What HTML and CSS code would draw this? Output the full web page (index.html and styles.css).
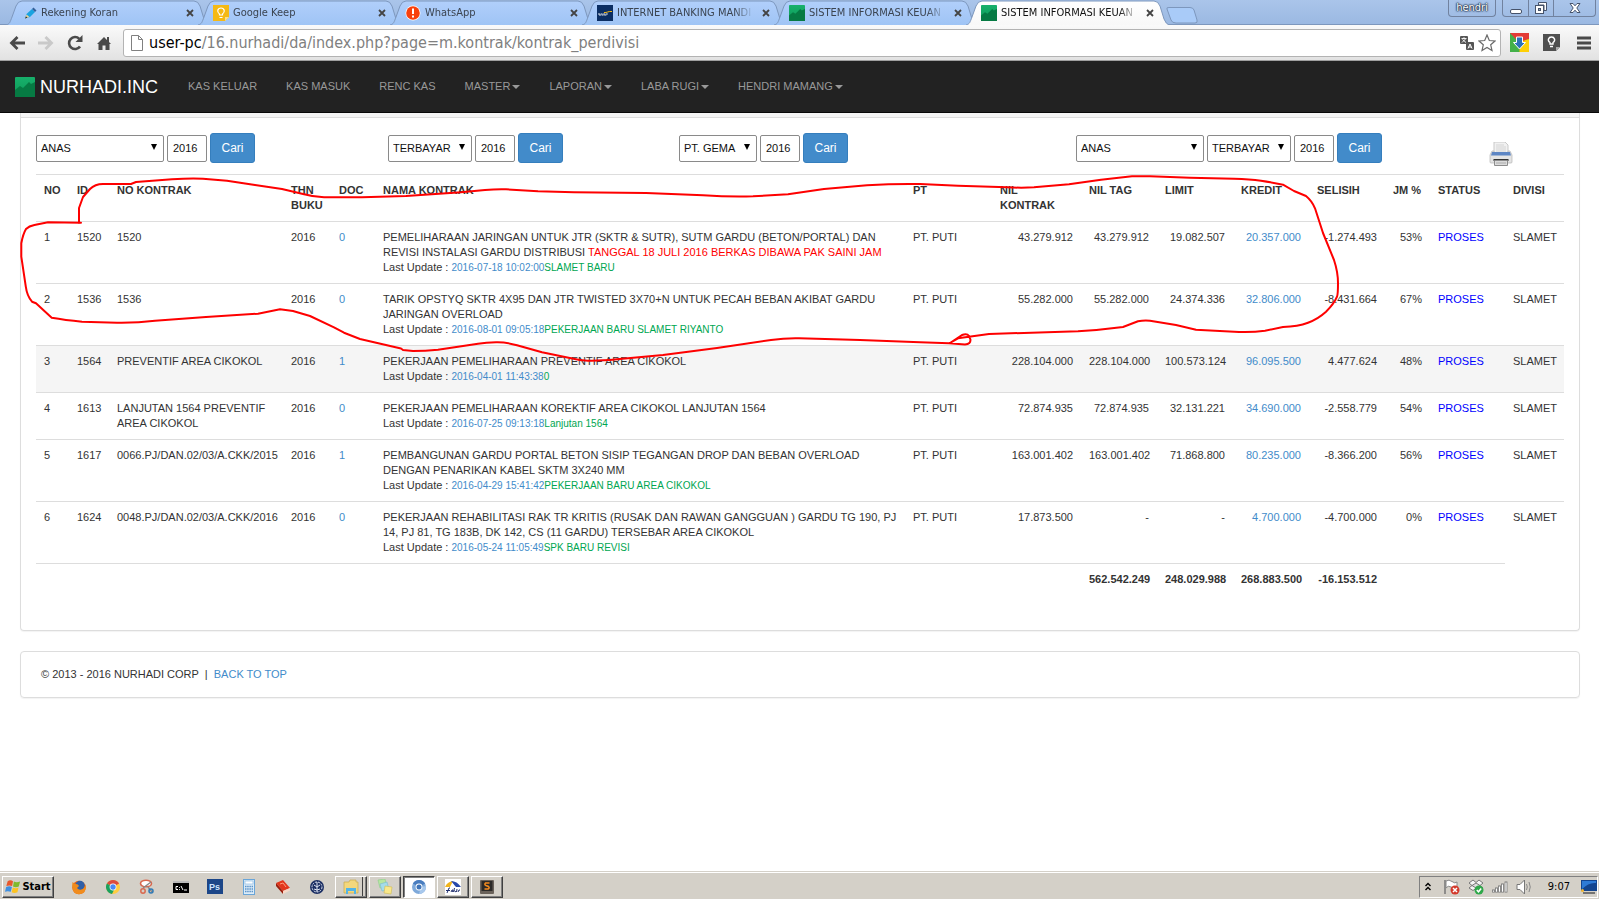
FILE: index.html
```html
<!DOCTYPE html>
<html lang="id">
<head>
<meta charset="utf-8">
<title>SISTEM INFORMASI KEUANGAN</title>
<link rel="stylesheet" href="styles.css">
</head>
<body>
<svg class="defs" aria-hidden="true">
  <defs>
    <linearGradient id="gTab" x1="0" y1="0" x2="0" y2="1"><stop offset="0" stop-color="#b1cffb"/><stop offset="1" stop-color="#9fc4f5"/></linearGradient>
    <linearGradient id="gActive" x1="0" y1="0" x2="0" y2="1"><stop offset="0" stop-color="#ffffff"/><stop offset="1" stop-color="#f8f8f8"/></linearGradient>
    <linearGradient id="gGreen" x1="0" y1="0" x2="0" y2="1"><stop offset="0" stop-color="#17b06b"/><stop offset="1" stop-color="#0d9a58"/></linearGradient>
    <symbol id="tabshape" viewBox="0 0 203 25"><path d="M0 25C4 24 4 22 6 17L10 6Q12 1 16 1H188Q192 1 194 6L198 19Q200 24 203 25" stroke="#7d97bd"/></symbol>
    <symbol id="chart" viewBox="0 0 20 20"><rect width="20" height="20" rx="1" fill="url(#gGreen)"/><path d="M0 13L5 9L8 11L14 5L16 7L20 5V20H0Z" fill="#067a43"/></symbol>
    <symbol id="x" viewBox="0 0 8 8"><path d="M1 1L7 7M7 1L1 7" stroke="#444" stroke-width="1.8"/></symbol>
    <symbol id="chrome" viewBox="0 0 16 16"><circle cx="8" cy="8" r="7" fill="#ffcd40"/><path d="M8 8L1.9 4.5A7 7 0 0 1 14.1 4.5Z" fill="#dd4b3e"/><path d="M8 8L1.9 4.5A7 7 0 0 0 7 14.9L10 9Z" fill="#1aa15f"/><circle cx="8" cy="8" r="3.4" fill="#fff"/><circle cx="8" cy="8" r="2.7" fill="#4a8af4"/></symbol>
  </defs>
</svg>

<div class="browser">
  <header class="tabstrip">
    <div class="tabs">
      <div class="tab"><svg class="tab-bg" preserveAspectRatio="none" fill="url(#gTab)"><use href="#tabshape"/></svg>
        <svg class="fav" viewBox="0 0 16 16"><path d="M4 13.500L5.500 9L11 4L14 7L9 12Z" fill="#1aa3e0"/><path d="M11 4L12.500 2.500L15.500 5.500L14 7Z" fill="#33619a"/><path d="M4 13.500L5.500 9.500L8.500 12Z" fill="#e8d29a"/><path d="M4 13.500L5 11.500L6.500 12.500Z" fill="#222"/></svg>
        <span class="tab-title">Rekening Koran</span><button class="tab-x" aria-label="Close"><svg><use href="#x"/></svg></button></div>
      <div class="tab"><svg class="tab-bg" preserveAspectRatio="none" fill="url(#gTab)"><use href="#tabshape"/></svg>
        <svg class="fav" viewBox="0 0 16 16"><path d="M0 0H16V12L12 16H0Z" fill="#f5b914"/><path d="M12 16V12H16Z" fill="#fbe08a"/><path d="M6.500 10V9C3.500 7 4.500 3 8 3S12.500 7 9.500 9V10ZM6.500 12.500H9.500" fill="none" stroke="#fff" stroke-width="1.200"/></svg>
        <span class="tab-title">Google Keep</span><button class="tab-x" aria-label="Close"><svg><use href="#x"/></svg></button></div>
      <div class="tab"><svg class="tab-bg" preserveAspectRatio="none" fill="url(#gTab)"><use href="#tabshape"/></svg>
        <svg class="fav" viewBox="0 0 16 16"><circle cx="8" cy="8" r="7.500" fill="#fff"/><circle cx="8" cy="8" r="6.800" fill="#f8400d"/><path d="M8 3.500V9M8 10.500V12.500" stroke="#fff" stroke-width="2"/></svg>
        <span class="tab-title">WhatsApp</span><button class="tab-x" aria-label="Close"><svg><use href="#x"/></svg></button></div>
      <div class="tab"><svg class="tab-bg" preserveAspectRatio="none" fill="url(#gTab)"><use href="#tabshape"/></svg>
        <svg class="fav" viewBox="0 0 16 16"><rect width="16" height="16" fill="#0b2e63"/><path d="M1 9H11M2 10H10" stroke="#dfe6ef" stroke-dasharray="2 .6"/><path d="M7 7.500C10 8 11 6 15 6.500" stroke="#f5b914" fill="none"/></svg>
        <span class="tab-title">INTERNET BANKING MANDI</span><button class="tab-x" aria-label="Close"><svg><use href="#x"/></svg></button></div>
      <div class="tab"><svg class="tab-bg" preserveAspectRatio="none" fill="url(#gTab)"><use href="#tabshape"/></svg>
        <svg class="fav"><use href="#chart"/></svg>
        <span class="tab-title">SISTEM INFORMASI KEUAN</span><button class="tab-x" aria-label="Close"><svg><use href="#x"/></svg></button></div>
      <div class="tab active"><svg class="tab-bg" preserveAspectRatio="none" fill="url(#gActive)"><use href="#tabshape"/></svg>
        <svg class="fav"><use href="#chart"/></svg>
        <span class="tab-title">SISTEM INFORMASI KEUAN</span><button class="tab-x" aria-label="Close"><svg><use href="#x"/></svg></button></div>
      <button class="newtab" aria-label="New tab"><svg viewBox="0 0 32 17"><path d="M1 2Q0 .500 3 .500H24Q27 .500 28 3L31 13Q32 16 29 16H10Q6 16 5 13Z" fill="#a9cbf8" stroke="#7d97bd"/></svg></button>
    </div>
    <button class="user">hendri</button>
    <div class="winctl">
      <button aria-label="Minimize"><svg viewBox="0 0 14 14"><rect x="1.500" y="8.500" width="11" height="4" rx="1.500" fill="#fff" stroke="#46536b"/></svg></button>
      <button aria-label="Restore"><svg viewBox="0 0 14 14"><path d="M4.500 1.500H12.500V9.500H10V4H4.500Z" fill="#fff" stroke="#46536b"/><rect x="1.500" y="4.500" width="8" height="8" fill="#fff" stroke="#46536b"/><rect x="4.500" y="7.500" width="2" height="2" fill="#9ab" stroke="#46536b"/></svg></button>
      <button class="wide" aria-label="Close window"><svg viewBox="0 0 14 14"><path d="M2 2.500H5L7 4.800L9 2.500H12L8.800 7L12 11.500H9L7 9.200L5 11.500H2L5.200 7Z" fill="#fff" stroke="#46536b"/></svg></button>
    </div>
  </header>

  <div class="toolbar">
    <button aria-label="Back"><svg viewBox="0 0 16 16"><path d="M8.500 2L2.500 8L8.500 14M2.500 8H16" fill="none" stroke="#4a4a4a" stroke-width="2.800"/></svg></button>
    <button aria-label="Forward"><svg viewBox="0 0 16 16"><path d="M7.500 2L13.500 8L7.500 14M13.500 8H0" fill="none" stroke="#c9c9c9" stroke-width="2.800"/></svg></button>
    <button aria-label="Reload"><svg viewBox="0 0 16 16"><path d="M13 11.500A6 6 0 1 1 12.300 3.800" fill="none" stroke="#4a4a4a" stroke-width="2.600"/><path d="M15.500 0V7H8.500Z" fill="#4a4a4a"/></svg></button>
    <button aria-label="Home"><svg viewBox="0 0 16 16"><path d="M1 9L8 2L11 5V2H13V7L15 9H13.500V15H9.500V10.500H6.500V15H2.500V9Z" fill="#4a4a4a"/></svg></button>
    <div class="omnibox">
      <svg class="page-ico" viewBox="0 0 12 16"><path d="M.500 .500H7.500L11.500 4.500V15.500H.500ZM7.500 .500V4.500H11.500" fill="#fff" stroke="#808080"/></svg>
      <span class="url"><b>user-pc</b>/16.nurhadi/da/index.php?page=m.kontrak/kontrak_perdivisi</span>
      <svg class="tr-ico" viewBox="0 0 14 14"><rect width="8" height="8" rx="1" fill="#555"/><path d="M1.500 2.500H6.500M4 1.200V2.500M2 6.500L5.500 3M2.500 3.500L6 6.500" stroke="#fff" stroke-width=".9"/><rect x="6" y="6" width="8" height="8" rx="1" fill="#555"/><path d="M8 12.500L10 8L12 12.500M8.700 11H11.300" stroke="#fff" fill="none"/></svg>
      <svg class="star" viewBox="0 0 18 18"><path d="M9 1L11.300 6.500L17 7L12.700 10.800L14 16.600L9 13.500L4 16.600L5.300 10.800L1 7L6.700 6.500Z" fill="#fff" stroke="#6a6a6a" stroke-width="1.200"/></svg>
    </div>
    <button class="ext" aria-label="Downloader"><svg viewBox="0 0 19 19"><path d="M0 0H19V19H0Z" fill="#43b049"/><path d="M0 0H19V6L9.500 10Z" fill="#e33b36"/><path d="M19 6V19H9.500V9Z" fill="#fed006"/><path d="M6.500 4H12.500V9.500H15.500L9.500 16L3.500 9.500H6.500Z" fill="#2c72b8" stroke="#fff"/></svg></button>
    <button class="ext" aria-label="Keep"><svg viewBox="0 0 19 19"><path d="M1 1H18V14L14 18H1Z" fill="#4f4f4f"/><path d="M14 18V14H18Z" fill="#aaa"/><path d="M8 11V9.500C5 7.500 6.500 4 9.500 4S14 7.500 11 9.500V11ZM8 13.500H11" fill="none" stroke="#fff" stroke-width="1.400"/></svg></button>
    <button class="menu" aria-label="Menu"><svg viewBox="0 0 14 14"><path d="M0 2H14M0 7H14M0 12H14" stroke="#4a4a4a" stroke-width="3"/></svg></button>
  </div>
</div>

<nav class="navbar">
  <a class="brand" href="#"><svg><use href="#chart"/></svg>NURHADI.INC</a>
  <a href="#">KAS KELUAR</a>
  <a href="#">KAS MASUK</a>
  <a href="#">RENC KAS</a>
  <a href="#">MASTER<i class="caret"></i></a>
  <a href="#">LAPORAN<i class="caret"></i></a>
  <a href="#">LABA RUGI<i class="caret"></i></a>
  <a href="#">HENDRI MAMANG<i class="caret"></i></a>
</nav>

<main class="content">
  <section class="panel main-panel">
    <div class="panel-head"></div>
    <div class="panel-body">
      <div class="filters">
        <form class="filter">
          <span class="pick"><select class="w-l" aria-label="Divisi"><option>ANAS</option></select></span>
          <input type="text" value="2016" aria-label="Tahun"><button type="button" class="btn">Cari</button>
        </form>
        <form class="filter">
          <span class="pick"><select class="w-m" aria-label="Status"><option>TERBAYAR</option></select></span>
          <input type="text" value="2016" aria-label="Tahun"><button type="button" class="btn">Cari</button>
        </form>
        <form class="filter">
          <span class="pick"><select class="w-s" aria-label="PT"><option>PT. GEMA</option></select></span>
          <input type="text" value="2016" aria-label="Tahun"><button type="button" class="btn">Cari</button>
        </form>
        <form class="filter">
          <span class="pick"><select class="w-l" aria-label="Divisi"><option>ANAS</option></select></span>
          <span class="pick"><select class="w-m" aria-label="Status"><option>TERBAYAR</option></select></span>
          <input type="text" value="2016" aria-label="Tahun"><button type="button" class="btn">Cari</button>
        </form>
        <a class="print" href="#" aria-label="Print"><svg viewBox="0 0 24 24"><path d="M5 0H16L19 3V12H5Z" fill="#f1f1f1" stroke="#c9c9c9"/><path d="M7 3H15M7 5H17M7 7H17M7 9H17" stroke="#d5d5d5"/><path d="M3 9H5V11H19V9H21L23 13V20Q23 21 22 21H2Q1 21 1 20V13Z" fill="#e4e4e4" stroke="#b4b4b4" stroke-width=".7"/><path d="M3 10H21L22 13.500H2Z" fill="#5d86c4"/><path d="M4.500 17H19.500V19H4.500Z" fill="#333"/><path d="M5.500 18.500H18.500V23.500H5.500Z" fill="#dcdcdc" stroke="#8c8c8c"/><path d="M7 21H17" stroke="#aaa"/></svg></a>
      </div>

      <table class="grid">
        <colgroup><col class="c33"><col class="c40"><col class="c174"><col class="c48"><col class="c44"><col class="c530"><col class="c87"><col class="c89"><col class="c76"><col class="c76"><col class="c76"><col class="c76"><col class="c45"><col class="c75"><col class="c59"></colgroup>
        <thead>
          <tr><th>NO</th><th>ID</th><th>NO KONTRAK</th><th>THN<br>BUKU</th><th>DOC</th><th>NAMA KONTRAK</th><th>PT</th><th>NIL<br>KONTRAK</th><th>NIL TAG</th><th>LIMIT</th><th>KREDIT</th><th>SELISIH</th><th>JM %</th><th>STATUS</th><th>DIVISI</th></tr>
        </thead>
        <tbody>
          <tr><td>1</td><td>1520</td><td>1520</td><td>2016</td><td><a href="#">0</a></td>
            <td>PEMELIHARAAN JARINGAN UNTUK JTR (SKTR &amp; SUTR), SUTM GARDU (BETON/PORTAL) DAN<br>REVISI INSTALASI GARDU DISTRIBUSI <span class="alert">TANGGAL 18 JULI 2016 BERKAS DIBAWA PAK SAINI JAM</span><br>Last Update : <small><span class="date">2016-07-18 10:02:00</span><span class="note">SLAMET BARU</span></small></td>
            <td>PT. PUTI</td><td class="n">43.279.912</td><td class="n">43.279.912</td><td class="n">19.082.507</td><td class="n"><a href="#">20.357.000</a></td><td class="n">-1.274.493</td><td class="n">53%</td><td class="st">PROSES</td><td>SLAMET</td></tr>
          <tr><td>2</td><td>1536</td><td>1536</td><td>2016</td><td><a href="#">0</a></td>
            <td>TARIK OPSTYQ SKTR 4X95 DAN JTR TWISTED 3X70+N UNTUK PECAH BEBAN AKIBAT GARDU<br>JARINGAN OVERLOAD<br>Last Update : <small><span class="date">2016-08-01 09:05:18</span><span class="note">PEKERJAAN BARU SLAMET RIYANTO</span></small></td>
            <td>PT. PUTI</td><td class="n">55.282.000</td><td class="n">55.282.000</td><td class="n">24.374.336</td><td class="n"><a href="#">32.806.000</a></td><td class="n">-8.431.664</td><td class="n">67%</td><td class="st">PROSES</td><td>SLAMET</td></tr>
          <tr class="hover"><td>3</td><td>1564</td><td>PREVENTIF AREA CIKOKOL</td><td>2016</td><td><a href="#">1</a></td>
            <td>PEKERJAAN PEMELIHARAAN PREVENTIF AREA CIKOKOL<br>Last Update : <small><span class="date">2016-04-01 11:43:38</span><span class="note">0</span></small></td>
            <td>PT. PUTI</td><td class="n">228.104.000</td><td class="n">228.104.000</td><td class="n">100.573.124</td><td class="n"><a href="#">96.095.500</a></td><td class="n">4.477.624</td><td class="n">48%</td><td class="st">PROSES</td><td>SLAMET</td></tr>
          <tr><td>4</td><td>1613</td><td>LANJUTAN 1564 PREVENTIF<br>AREA CIKOKOL</td><td>2016</td><td><a href="#">0</a></td>
            <td>PEKERJAAN PEMELIHARAAN KOREKTIF AREA CIKOKOL LANJUTAN 1564<br>Last Update : <small><span class="date">2016-07-25 09:13:18</span><span class="note">Lanjutan 1564</span></small></td>
            <td>PT. PUTI</td><td class="n">72.874.935</td><td class="n">72.874.935</td><td class="n">32.131.221</td><td class="n"><a href="#">34.690.000</a></td><td class="n">-2.558.779</td><td class="n">54%</td><td class="st">PROSES</td><td>SLAMET</td></tr>
          <tr><td>5</td><td>1617</td><td>0066.PJ/DAN.02/03/A.CKK/2015</td><td>2016</td><td><a href="#">1</a></td>
            <td>PEMBANGUNAN GARDU PORTAL BETON SISIP TEGANGAN DROP DAN BEBAN OVERLOAD<br>DENGAN PENARIKAN KABEL SKTM 3X240 MM<br>Last Update : <small><span class="date">2016-04-29 15:41:42</span><span class="note">PEKERJAAN BARU AREA CIKOKOL</span></small></td>
            <td>PT. PUTI</td><td class="n">163.001.402</td><td class="n">163.001.402</td><td class="n">71.868.800</td><td class="n"><a href="#">80.235.000</a></td><td class="n">-8.366.200</td><td class="n">56%</td><td class="st">PROSES</td><td>SLAMET</td></tr>
          <tr><td>6</td><td>1624</td><td>0048.PJ/DAN.02/03/A.CKK/2016</td><td>2016</td><td><a href="#">0</a></td>
            <td>PEKERJAAN REHABILITASI RAK TR KRITIS (RUSAK DAN RAWAN GANGGUAN ) GARDU TG 190, PJ<br>14, PJ 81, TG 183B, DK 142, CS (11 GARDU) TERSEBAR AREA CIKOKOL<br>Last Update : <small><span class="date">2016-05-24 11:05:49</span><span class="note">SPK BARU REVISI</span></small></td>
            <td>PT. PUTI</td><td class="n">17.873.500</td><td class="n">-</td><td class="n">-</td><td class="n"><a href="#">4.700.000</a></td><td class="n">-4.700.000</td><td class="n">0%</td><td class="st">PROSES</td><td>SLAMET</td></tr>
        </tbody>
        <tfoot>
          <tr><td colspan="8"></td><td class="n">562.542.249</td><td class="n">248.029.988</td><td class="n">268.883.500</td><td class="n">-16.153.512</td><td></td><td></td></tr>
        </tfoot>
      </table>
    </div>
  </section>

  <footer class="panel foot">© 2013 - 2016 NURHADI CORP &nbsp;|&nbsp; <a href="#">BACK TO TOP</a></footer>
</main>

<svg class="scribble" viewBox="0 0 1599 400" preserveAspectRatio="none" aria-hidden="true"><path d="M79 223L79 208L83 197L90 189Q95 184 103 184L131 184L136 182L172 179.300Q190 178 203 178.700L227 180.700L255 185L282 189L303 194Q314 197 324 197.300H362L406 196L461 192.300L485 190Q496 189 506 189.300L538 191.300L574 192.300L646 193L703 195.300Q730 197 753 196.300L788 194.300L824 189L867 185.300Q895 183.500 920 184L958 185.700L1007 187.300Q1022 188 1034 187.300L1069 184.300L1101 179.700L1132 176.300H1150L1190 177.700L1234 178.700Q1250 179 1261 180.700T1283 184.700L1294 191L1306 196Q1312 201 1315 208.300L1323 233L1334 260Q1338 272 1338 283.300T1337 296.700Q1334 304 1326 311.700Q1318 319 1308 322.700T1283 327L1265 330.700Q1253 332.500 1239 332L1196 329.700L1176 325L1150 320.700Q1144 320 1138 321.300L1123 327Q1100 330 1078 331.300L989 334L958 338.300L950 343L962 335Q967 333 969 336L970.400 339.300Q971 344 965 344.500L949 343.300L920 342.300L860 340L799 338.300Q785 338 771 340L717 348L663 355L617 359.300Q600 361 588 360.700Q580 360.500 571 358.300L542 352.300L517 345.300Q506 342 496 342.300T478 343.700L438 349.700Q425 351 413 351L403 350L401 348.500L360 339L344 332.700L334 327.300L310 316L293 311L280 309.300L258 313.700L206 317L155 320.700Q137 323 117 322.700L82 321.700Q65 320 51.700 317.700L36 303.300L32 301.700Q27 296 25.800 286.700L21.300 256.700V243.300Q23 234 26 229Q29 226 34.400 225L48 222.300L81 222.700" fill="none" stroke="#fe0000" stroke-width="2" stroke-linejoin="round" stroke-linecap="round"/></svg>

<footer class="taskbar">
  <button class="start"><svg viewBox="0 0 18 16"><path d="M3 2Q6 0 9 2L8 7.500Q5 6 1.500 7.500Z" fill="#e8582c"/><path d="M10 2.500Q13 4 17 2.500L15.500 8Q12 9.500 9 8Z" fill="#7fba2c"/><path d="M1.300 8.700Q5 7 7.800 8.700L6.500 14Q3 12.500 0 14Z" fill="#3f8fe0"/><path d="M8.800 9.200Q12 11 15.200 9.200L14 14.500Q10.500 16 7.500 14.500Z" fill="#fcc321"/></svg>Start</button>
  <div class="quick">
    <svg viewBox="0 0 16 16"><circle cx="8" cy="8.500" r="6.800" fill="#e8661b"/><circle cx="9" cy="6.500" r="4.700" fill="#2f5fa8"/><path d="M1.500 3L4 5Q7 4.500 8 7L6 9Q8 12 12 10Q14 8 14.800 5Q16 15 8 15.300Q0 15 1.500 3Z" fill="#f08c1d"/></svg>
    <svg><use href="#chrome"/></svg>
    <svg viewBox="0 0 16 16"><ellipse cx="7" cy="4.500" rx="5.500" ry="3.300" fill="#fff" stroke="#d9694f" stroke-width="1.600"/><path d="M4 9L12 3M9 8L13 13" stroke="#888" stroke-width="1.400"/><circle cx="12" cy="12" r="2" fill="none" stroke="#2f79b5" stroke-width="1.500"/><circle cx="4" cy="12" r="2.200" fill="none" stroke="#d9694f" stroke-width="1.500"/></svg>
    <svg viewBox="0 0 16 16"><rect x="0" y="2" width="16" height="12" fill="#000"/><rect y="2" width="16" height="2" fill="#bbb"/><path d="M5 7.500H3V10.500H5M6.500 8V8.800M6.500 10V10.800M8 7L10 11M11 11H14" stroke="#fff" fill="none"/></svg>
    <svg viewBox="0 0 16 16"><rect x="0" y="0" width="16" height="15" fill="#1c4688"/><text x="2" y="11" class="ps">Ps</text></svg>
    <svg viewBox="0 0 16 16"><rect x="2.500" y=".5" width="11" height="15" fill="#dcecf8" stroke="#6aa5d8"/><rect x="4" y="2" width="8" height="3" fill="#fff" stroke="#7fb2df" stroke-width=".6"/><path d="M4 7.500H12M4 10H12M4 12.500H12" stroke="#5c93c8" stroke-width="1.500" stroke-dasharray="1.500 .7"/></svg>
    <svg viewBox="0 0 16 16"><path d="M1 4L8 1L15 9L8 12Z" fill="#e2371c"/><path d="M1 4L8 12V15L1 7Z" fill="#9c1d0c"/><path d="M8 12L15 9V11.500L8 15Z" fill="#f5d9c8"/><path d="M5 5L8 4L11 8" stroke="#ff9a7a" fill="none"/></svg>
    <svg viewBox="0 0 16 16"><circle cx="8" cy="8" r="7" fill="#1c2f63"/><circle cx="8" cy="8" r="5" fill="none" stroke="#dfe6f3" stroke-dasharray="2 1"/><path d="M8 3V13M5 6L8 8L11 6M5 10L8 11L11 10" stroke="#dfe6f3" fill="none"/></svg>
  </div>
  <div class="apps">
    <button class="stack" aria-label="Explorer"><svg viewBox="0 0 16 16"><path d="M1 3H6L7 1H13V3H15V14H1Z" fill="#f3d77c" stroke="#c9a94c" stroke-width=".7"/><path d="M3 9H13V15H11V12H5V15H3Z" fill="#53b4e6"/></svg></button>
    <button aria-label="Notes"><svg viewBox="0 0 16 16"><path d="M1 1L8 0L10 8L3 9Z" fill="#b9e6a0" stroke="#8c8" stroke-width=".6"/><path d="M3 5L10 3L12 11L5 12Z" fill="#a5dcea" stroke="#7bc" stroke-width=".6"/><path d="M8 7L15 8L14 15L7 14Z" fill="#fae88a" stroke="#cb5" stroke-width=".6"/></svg></button>
    <button class="pressed" aria-label="Chromium"><svg viewBox="0 0 16 16"><circle cx="8" cy="8" r="7" fill="#7ea9da"/><path d="M8 8L1.900 4.500A7 7 0 0 1 14.100 4.500Z" fill="#4a7dbf"/><path d="M8 15A7 7 0 0 0 15 7L10 8Z" fill="#a8c8ec"/><circle cx="8" cy="8" r="3.400" fill="#fff"/><circle cx="8" cy="8" r="2.500" fill="#3f74b8"/></svg></button>
    <button aria-label="Faktur"><svg viewBox="0 0 16 16"><rect width="16" height="16" fill="#fff"/><path d="M0 8Q2 3 8 2L5 8Z" fill="#f1b51c"/><path d="M6 2Q12 2 16 8H11Z" fill="#2848a8"/><path d="M2 14L4 9H5M1 11.500H5M6 13L7 11H8L7.500 13M9.500 9L8.500 13M9 11.500L11 13M12 10L11.500 13M13 13L14 11H15" stroke="#22306e" fill="none"/></svg></button>
    <button aria-label="Editor"><svg viewBox="0 0 16 16"><rect x="1" y="1" width="14" height="14" rx="1" fill="#6a625a"/><rect x="2.500" y="2" width="11" height="10" fill="#2c2a28"/><path d="M10.500 4H6.500Q5 5.500 7 6.500L9.500 7.500Q11 9 9 10H5.500" fill="none" stroke="#f58b1e" stroke-width="1.500"/></svg></button>
  </div>
  <div class="tray">
    <svg viewBox="0 0 16 16"><path d="M5.500 7L8 4.500L10.500 7M5.500 11L8 8.500L10.500 11" fill="none" stroke="#000" stroke-width="1.400"/></svg>
    <svg viewBox="0 0 16 16"><path d="M1 1V15" stroke="#777" stroke-width="1.500"/><path d="M2 2Q5 0 8 2.500T13 3V9Q10 10 7 8T2 9Z" fill="#fff" stroke="#888"/><circle cx="11" cy="11" r="4.500" fill="#d33a2c"/><path d="M9 9L13 13M13 9L9 13" stroke="#fff" stroke-width="1.500"/></svg>
    <svg viewBox="0 0 16 16"><path d="M5 1L8 3.500L11 1L15 4L12 6.500L15 9L11 11.500L8 9.500L5 11.500L1 9L4 6.500L1 4Z" fill="#f4f4f4" stroke="#777"/><path d="M4 6.500L8 4L12 6.500L8 9Z" fill="#ddd" stroke="#777"/><circle cx="11" cy="11" r="4.500" fill="#2fa84a"/><path d="M8.800 11L10.500 12.800L13.200 9.500" stroke="#fff" fill="none" stroke-width="1.500"/></svg>
    <svg viewBox="0 0 16 16"><path d="M1.500 10.500V13.500M4.500 8.500V13.500M7.500 6.500V13.500M10.500 4.500V13.500M14 2.500V13.500" stroke="#777" stroke-width="2.800"/><path d="M1.500 11.500V12.700M4.500 9.500V12.700M7.500 7.500V12.700M10.500 5.500V12.700M14 3.500V12.700" stroke="#fff" stroke-width="1.200"/></svg>
    <svg viewBox="0 0 16 16"><path d="M1 5.500H4L8.500 1V15L4 10.500H1Z" fill="#fff" stroke="#777"/><path d="M10.500 5Q12 8 10.500 11M13 3Q15.500 8 13 13" stroke="#888" fill="none"/></svg>
    <time>9:07</time>
    <svg class="desk" viewBox="0 0 17 14"><rect x="1" y="0" width="16" height="11" fill="#14458f"/><path d="M2 9Q9 2 16 3V1H2Z" fill="#2f7bd6"/><path d="M3 13H15" stroke="#555" stroke-width="1.500"/><circle cx="2.500" cy="10.500" r="1.500" fill="#f2b632"/></svg>
  </div>
</footer>
</body>
</html>
```
FILE: styles.css
```css
* { box-sizing: border-box; }
html, body { height: 100%; }
body {
  margin: 0;
  position: relative;
  display: flex;
  flex-direction: column;
  min-height: 100vh;
  background: #fff;
  color: #333;
  font: 11px/15px "Liberation Sans", Arial, sans-serif;
}
button { margin: 0; padding: 0; border: 0; background: none; font: inherit; color: inherit; }
svg { display: block; }
a { color: #428bca; text-decoration: none; }
.defs { position: absolute; width: 0; height: 0; }

/* browser chrome */
.tabstrip {
  display: flex;
  align-items: flex-start;
  height: 25px;
  padding: 0 3px 0 6px;
  background: linear-gradient(#aac5ea, #9bb9e2);
  border-bottom: 1px solid #7d97bd;
  font: 11px/16px "DejaVu Sans Condensed", "Noto Sans", sans-serif;
}
.tabs { display: flex; flex: 1; min-width: 0; }
.tab {
  position: relative;
  display: flex;
  align-items: center;
  flex: 0 1 203px;
  min-width: 0;
  height: 25px;
  margin-right: -11px;
  padding: 1px 15px 0 15px;
  color: #3b4450;
}
.tab-bg { position: absolute; left: 0; top: 0; width: 100%; height: 25px; }
.tab.active { z-index: 1; color: #111; }
.tab > *:not(.tab-bg) { position: relative; }
.fav { flex: none; width: 16px; height: 16px; margin-right: 4px; }
.tab-title {
  flex: 1;
  min-width: 0;
  white-space: nowrap;
  -webkit-mask-image: linear-gradient(90deg, #000 86%, transparent);
  mask-image: linear-gradient(90deg, #000 86%, transparent);
}
.tab-x { flex: none; margin-left: 8px; }
.tab-x svg { width: 8px; height: 8px; }
.newtab { margin: 5px 0 0 8px; }
.newtab svg { width: 32px; height: 17px; }
.user {
  width: 48px;
  height: 17px;
  margin-right: 6px;
  border: 1px solid #71829f;
  border-top: 0;
  border-radius: 0 0 4px 4px;
  color: #fff;
  text-shadow: 0 0 1px #1d2c45, 0 0 1px #1d2c45, 0 0 2px #1d2c45, 0 0 2px #1d2c45;
}
.winctl { display: flex; height: 17px; border: 1px solid #71829f; border-top: 0; border-radius: 0 0 4px 4px; }
.winctl button { display: grid; place-items: center; width: 25px; }
.winctl button + button { border-left: 1px solid #71829f; }
.winctl .wide { width: 42px; }
.winctl svg { width: 14px; height: 14px; }
.toolbar {
  display: flex;
  align-items: center;
  height: 36px;
  padding: 0 8px 0 9px;
  background: linear-gradient(#fafafa, #e2e2e2);
  border-bottom: 1px solid #a0a0a0;
}
.toolbar > button { margin-right: 13px; }
.toolbar > button svg { width: 16px; height: 16px; }
.omnibox {
  display: flex;
  align-items: center;
  flex: 1;
  height: 28px;
  margin-right: 9px;
  margin-left: -2px;
  padding: 0 4px 0 7px;
  background: #fff;
  border: 1px solid #b3b3b3;
  border-radius: 3px;
}
.page-ico { width: 12px; height: 16px; }
.url { flex: 1; margin-left: 6px; color: #808080; font: 16px/20px "DejaVu Sans Condensed", "Noto Sans", sans-serif; }
.url b { color: #000; font-weight: 400; }
.tr-ico { width: 14px; height: 14px; }
.star { width: 18px; height: 18px; margin-left: 4px; }
.toolbar .ext svg { width: 19px; height: 19px; }
.toolbar .menu { margin: 0 0 0 3px; }
.toolbar .menu svg { width: 14px; height: 14px; }

/* application navbar */
.navbar {
  display: flex;
  align-items: center;
  height: 52px;
  background: #222;
  border-bottom: 1px solid #080808;
}
.navbar a { padding: 0 14px 0 15px; color: #999; white-space: nowrap; }
.navbar .brand { display: flex; align-items: center; gap: 5px; padding-right: 15px; color: #fff; font-size: 18px; line-height: 20px; }
.brand svg { width: 20px; height: 20px; }
.caret {
  display: inline-block;
  margin-left: 2px;
  vertical-align: middle;
  border-top: 4px solid;
  border-left: 4px solid transparent;
  border-right: 4px solid transparent;
}

/* panels */
.content { flex: 1; padding: 0 19px 0 20px; }
.panel { border: 1px solid #ddd; border-radius: 4px; box-shadow: 0 1px 1px rgba(0, 0, 0, .05); }
.main-panel { border-top: 0; border-top-left-radius: 0; border-top-right-radius: 0; margin-bottom: 20px; }
.panel-head { height: 5px; background: #f5f5f5; border-bottom: 1px solid #ddd; }
.panel-body { padding: 15px 15px 35px; }
.foot { padding: 15px 20px; }

.filters {
  display: grid;
  grid-template-columns: 352fr 291fr 397fr 413fr 75fr;
  align-items: start;
  height: 41px;
}
.filter { display: flex; align-items: center; gap: 3px; }
.pick { position: relative; }
.pick::after {
  content: "";
  position: absolute;
  right: 7px;
  top: 9px;
  border-top: 6px solid #000;
  border-left: 3px solid transparent;
  border-right: 3px solid transparent;
  pointer-events: none;
}
.filter select, .filter input {
  display: block;
  height: 27px;
  margin: 0;
  padding: 0 4px;
  border: 1px solid #8a8a8a;
  border-radius: 2px;
  background: #fff;
  color: #111;
  font: 11px/15px "Liberation Sans", Arial, sans-serif;
}
.filter select { appearance: none; }
.filter input { width: 40px; padding: 0 5px; }
.w-l { width: 128px; }
.w-m { width: 84px; }
.w-s { width: 78px; }
.btn {
  width: 45px;
  height: 30px;
  border: 1px solid #357ebd;
  border-radius: 3px;
  background: #428bca;
  color: #fff;
  font-size: 12px;
}
.print svg { width: 24px; height: 24px; margin-top: 9px; }

.grid { width: 100%; border-collapse: collapse; table-layout: fixed; }
.grid th, .grid td {
  padding: 8px;
  border-top: 1px solid #ddd;
  text-align: left;
  vertical-align: top;
  white-space: nowrap;
}
.grid .n { text-align: right; }
.grid .st { color: #00f; }
.grid tfoot { font-weight: 700; }
.hover { background: #f5f5f5; }
.alert { color: #f00; }
.grid small { font-size: 10px; line-height: 15px; }
.date { color: #428bca; }
.note { color: #00a651; }
.c33 { width: 33px; } .c40 { width: 40px; } .c174 { width: 174px; } .c48 { width: 48px; }
.c44 { width: 44px; } .c530 { width: 530px; } .c87 { width: 87px; } .c89 { width: 89px; }
.c76 { width: 76px; } .c45 { width: 45px; } .c75 { width: 75px; } .c59 { width: 59px; }

.scribble { position: absolute; left: 0; top: 0; width: 100%; height: 400px; pointer-events: none; }

/* taskbar */
.taskbar {
  display: flex;
  align-items: center;
  height: 28px;
  padding: 3px 1px 0 2px;
  background: #d4d0c8;
  box-shadow: inset 0 1px #d4d0c8, inset 0 2px #fff;
  color: #000;
}
.start, .apps button {
  display: flex;
  align-items: center;
  justify-content: center;
  height: 22px;
  border: 1px solid;
  border-color: #fff #404040 #404040 #fff;
  box-shadow: inset -1px -1px #808080;
}
.start { width: 52px; gap: 1px; font: 700 11px/16px "DejaVu Sans Condensed", "Noto Sans", sans-serif; }
.start svg { width: 16px; height: 15px; }
.quick { display: flex; gap: 18px; margin-left: 17px; }
.quick svg, .apps svg, .tray svg { width: 16px; height: 16px; }
.ps { fill: #cfe4ff; font: 700 9px "Liberation Sans", sans-serif; }
.apps { display: flex; gap: 2px; margin-left: 10px; }
.apps button { width: 32px; }
.apps .stack { box-shadow: inset -1px -1px #808080, inset -3px 0 #d4d0c8, inset -4px 0 #404040; }
.apps .pressed { background: #fff; border-color: #404040 #fff #fff #404040; box-shadow: inset 1px 1px #808080; }
.tray {
  display: flex;
  align-items: center;
  gap: 8px;
  height: 22px;
  margin-left: auto;
  border: 1px solid;
  border-color: #808080 #fff #fff #808080;
}
.tray time { margin: 0 2px 0 8px; font: 11px/15px "DejaVu Sans Condensed", "Noto Sans", sans-serif; }
.tray .desk { width: 17px; height: 14px; }
```
